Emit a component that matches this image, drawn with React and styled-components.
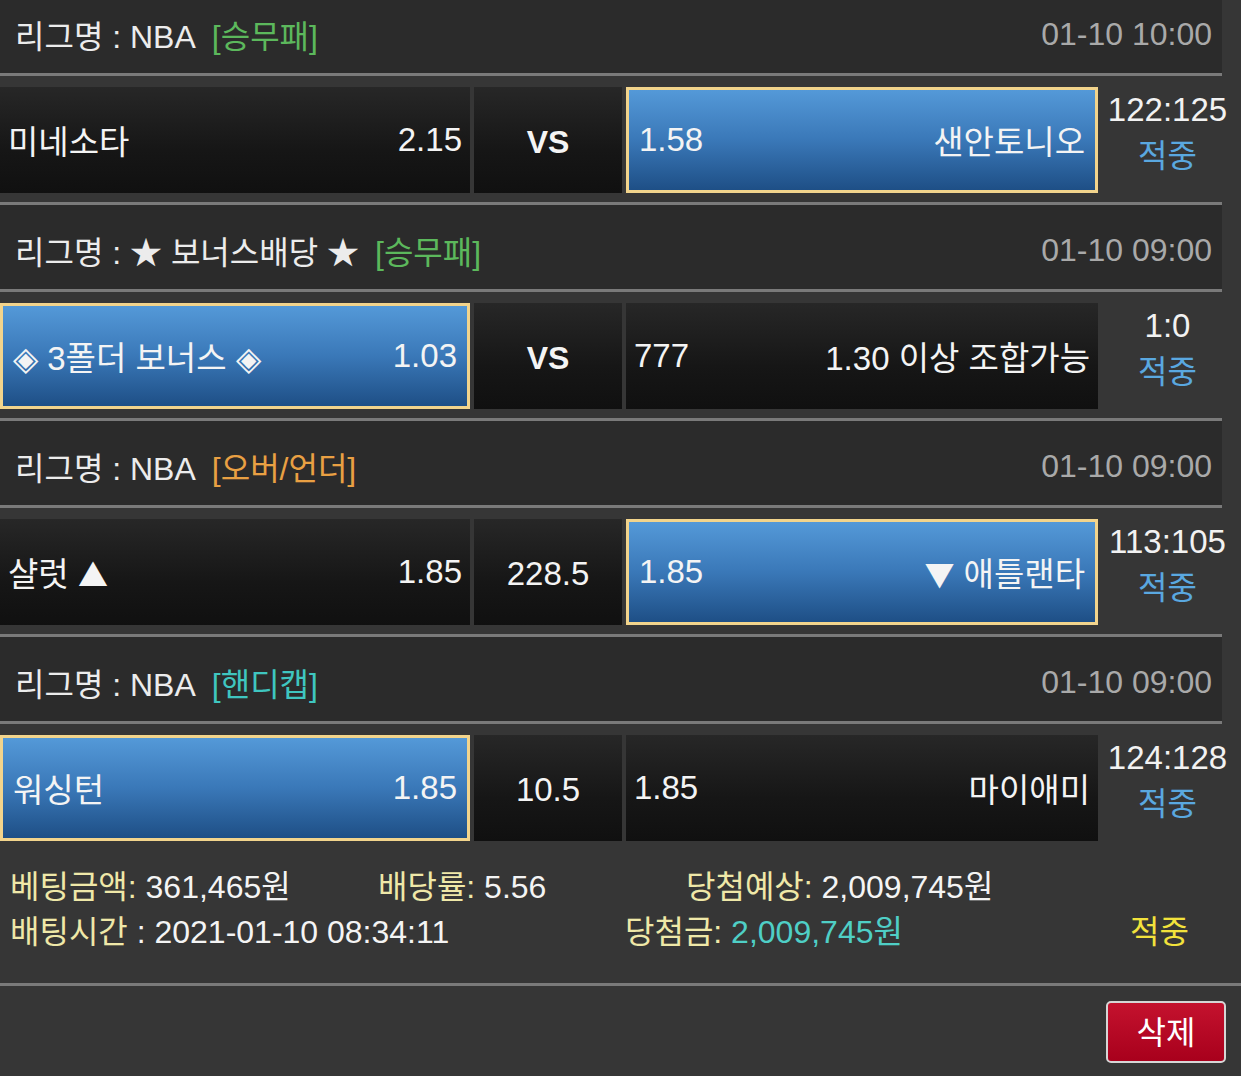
import React from "react";
import styled, { createGlobalStyle } from "styled-components";

const GlobalStyle = createGlobalStyle`
  html, body {
    margin: 0;
    padding: 0;
    background: #363636;
    font-family: "Liberation Sans", "Noto Sans CJK KR", sans-serif;
    color: #f2f2f2;
    overflow: hidden;
  }
`;

const Page = styled.div`
  width: 1241px;
  margin-top: -14px;
`;

const League = styled.div`
  width: 1222px;
  height: 90px;
  box-sizing: border-box;
  background: #2b2b2b;
  border-top: 3px solid #7a7a7a;
  border-bottom: 3px solid #7a7a7a;
  display: flex;
  align-items: center;
  justify-content: space-between;
  padding: 6px 10px 0 15px;
  font-size: 32px;
`;

const LeagueName = styled.div`
  color: #ececec;
  display: flex;
  gap: 16px;
`;

const Kind = styled.span`
  color: ${(p) => p.$color};
`;

const Time = styled.div`
  color: #a9a9a9;
`;

const MatchRow = styled.div`
  height: 126px;
  box-sizing: border-box;
  padding: 11px 0 9px;
  display: grid;
  grid-template-columns: 470px 148px 472px 1fr;
  column-gap: 4px;
`;

const Cell = styled.div`
  display: flex;
  align-items: center;
  justify-content: ${(p) => (p.$center ? "center" : "space-between")};
  box-sizing: border-box;
  font-size: 33px;
  color: #f4f4f4;
  padding: 0 ${(p) => (p.$selected ? "10px" : "8px")};
  border: ${(p) => (p.$selected ? "3px solid #f2d48c" : "none")};
  background: ${(p) =>
    p.$selected
      ? "linear-gradient(#5499d8, #3a78b8 50%, #1e4f86)"
      : "linear-gradient(#272727, #161616 60%, #101010)"};
`;

const Middle = styled.span`
  font-weight: ${(p) => (p.$bold ? 700 : 400)};
  font-size: ${(p) => (p.$bold ? "32px" : "33px")};
  padding-top: 4px;
`;

const Arrow = styled.span`
  font-family: "Noto Sans CJK KR", sans-serif;
  font-size: 30px;
`;

const Score = styled.div`
  display: flex;
  flex-direction: column;
  align-items: center;
  justify-content: center;
  margin-top: -14px;
  margin-left: -8px;
  font-size: 33px;
  line-height: 46px;
`;

const Result = styled.span`
  color: ${(p) => p.$color || "#5aa8e0"};
  font-size: 32px;
`;

const Info = styled.div`
  padding: 11px 0 32px 10px;
  font-size: 32px;
  border-bottom: 3px solid #7a7a7a;
`;

const InfoLine = styled.div`
  display: flex;
  align-items: center;
  height: 45px;
`;

const InfoItem = styled.span`
  width: ${(p) => (p.$w ? `${p.$w}px` : "auto")};
  color: #f4f4f4;
  white-space: nowrap;
`;

const Label = styled.span`
  color: #efe8a8;
`;

const Money = styled.span`
  color: #4fcfc6;
`;

const Footer = styled.div`
  display: flex;
  justify-content: flex-end;
  padding: 15px 15px 0 0;
`;

const DeleteButton = styled.button`
  width: 120px;
  height: 62px;
  border: 2px solid #d6d6d6;
  border-radius: 5px;
  background: linear-gradient(#c4122e, #a8001c);
  color: #fff;
  font-family: "Liberation Sans", "Noto Sans CJK KR", sans-serif;
  font-size: 32px;
  padding: 0 0 4px;
  cursor: pointer;
`;

const games = [
  {
    league: "NBA",
    kind: "[승무패]",
    kindColor: "#5cb85c",
    time: "01-10 10:00",
    home: "미네소타",
    homeOdds: "2.15",
    mid: "VS",
    awayOdds: "1.58",
    away: "샌안토니오",
    pick: "away",
    score: "122:125",
  },
  {
    league: "★ 보너스배당 ★",
    kind: "[승무패]",
    kindColor: "#5cb85c",
    time: "01-10 09:00",
    home: "◈ 3폴더 보너스 ◈",
    homeOdds: "1.03",
    mid: "VS",
    awayOdds: "777",
    away: "1.30 이상 조합가능",
    pick: "home",
    score: "1:0",
  },
  {
    league: "NBA",
    kind: "[오버/언더]",
    kindColor: "#e9a043",
    time: "01-10 09:00",
    home: (
      <>
        샬럿 <Arrow>▲</Arrow>
      </>
    ),
    homeOdds: "1.85",
    mid: "228.5",
    awayOdds: "1.85",
    away: (
      <>
        <Arrow>▼</Arrow> 애틀랜타
      </>
    ),
    pick: "away",
    score: "113:105",
  },
  {
    league: "NBA",
    kind: "[핸디캡]",
    kindColor: "#3fc6c0",
    time: "01-10 09:00",
    home: "워싱턴",
    homeOdds: "1.85",
    mid: "10.5",
    awayOdds: "1.85",
    away: "마이애미",
    pick: "home",
    score: "124:128",
  },
];

const Game = ({ g }) => (
  <>
    <League>
      <LeagueName>
        <span>리그명 : {g.league}</span>
        <Kind $color={g.kindColor}>{g.kind}</Kind>
      </LeagueName>
      <Time>{g.time}</Time>
    </League>
    <MatchRow>
      <Cell $selected={g.pick === "home"}>
        <span>{g.home}</span>
        <span>{g.homeOdds}</span>
      </Cell>
      <Cell $center>
        <Middle $bold={g.mid === "VS"}>{g.mid}</Middle>
      </Cell>
      <Cell $selected={g.pick === "away"}>
        <span>{g.awayOdds}</span>
        <span>{g.away}</span>
      </Cell>
      <Score>
        <span>{g.score}</span>
        <Result>적중</Result>
      </Score>
    </MatchRow>
  </>
);

const App = () => {
  return (
    <>
      <GlobalStyle />
      <Page>
        {games.map((g, i) => (
          <Game key={i} g={g} />
        ))}
        <Info>
          <InfoLine>
            <InfoItem $w={368}>
              <Label>베팅금액:</Label> 361,465원
            </InfoItem>
            <InfoItem $w={308}>
              <Label>배당률:</Label> 5.56
            </InfoItem>
            <InfoItem>
              <Label>당첨예상:</Label> 2,009,745원
            </InfoItem>
          </InfoLine>
          <InfoLine>
            <InfoItem $w={615}>
              <Label>배팅시간</Label> : 2021-01-10 08:34:11
            </InfoItem>
            <InfoItem $w={505}>
              <Label>당첨금:</Label> <Money>2,009,745원</Money>
            </InfoItem>
            <InfoItem>
              <Result $color="#f2e23c">적중</Result>
            </InfoItem>
          </InfoLine>
        </Info>
        <Footer>
          <DeleteButton>삭제</DeleteButton>
        </Footer>
      </Page>
    </>
  );
};

export default App;
